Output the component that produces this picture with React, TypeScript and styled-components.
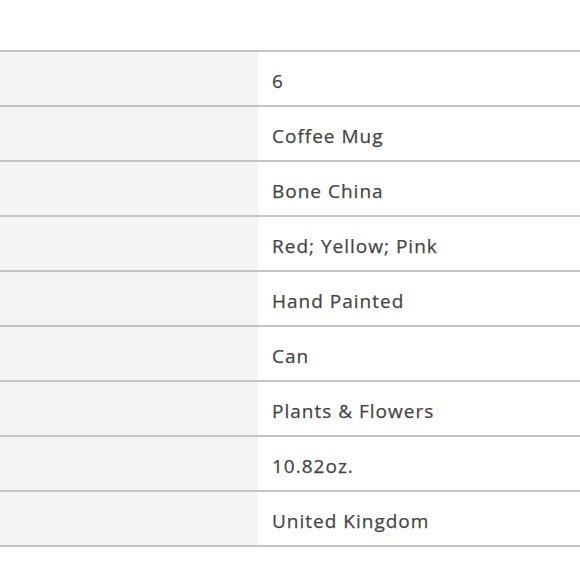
import React from "react";
import styled, { createGlobalStyle } from "styled-components";

const Global = createGlobalStyle`
  html, body { margin: 0; padding: 0; background: #ffffff; }
  body { font-family: "Open Sans", "Noto Sans", sans-serif; }
`;

const Page = styled.div`
  padding-top: 50px;
  width: 580px;
`;

const Table = styled.div`
  display: flex;
  flex-direction: column;
  border-top: 2px solid #c4c4c4;
`;

const Row = styled.div`
  display: grid;
  grid-template-columns: 258px 1fr;
  height: 53px;
  border-bottom: 2px solid #c4c4c4;
`;

const Label = styled.div`
  background: #f4f4f4;
`;

const Value = styled.div`
  display: flex;
  align-items: center;
  padding: 4px 0 0 14px;
  font-size: 19px;
  font-weight: 400;
  color: #454545;
  letter-spacing: 1px;
  -webkit-text-stroke: 0.25px #454545;
`;

const rows = [
  "6",
  "Coffee Mug",
  "Bone China",
  "Red; Yellow; Pink",
  "Hand Painted",
  "Can",
  "Plants & Flowers",
  "10.82oz.",
  "United Kingdom",
];

export default function App() {
  return (
    <>
      <Global />
      <Page>
        <Table>
          {rows.map((v) => (
            <Row key={v}>
              <Label />
              <Value>{v}</Value>
            </Row>
          ))}
        </Table>
      </Page>
    </>
  );
}
